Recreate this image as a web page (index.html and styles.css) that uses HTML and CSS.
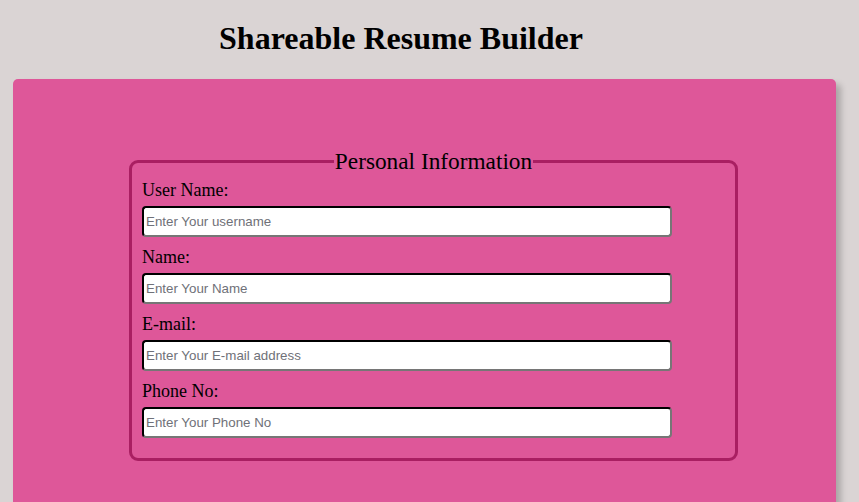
FILE: index.html
```html
<!DOCTYPE html>
<html lang="en">
<head>
<meta charset="utf-8">
<title>Shareable Resume Builder</title>
<link rel="stylesheet" href="styles.css">
</head>
<body>
  <h1 class="title">Shareable Resume Builder</h1>
  <main class="card">
    <form class="form">
      <fieldset class="section">
        <legend class="section-title">Personal Information</legend>
        <label class="field-label" for="username">User Name:</label>
        <input class="field-input" id="username" type="text" placeholder="Enter Your username">
        <label class="field-label" for="name">Name:</label>
        <input class="field-input" id="name" type="text" placeholder="Enter Your Name">
        <label class="field-label" for="email">E-mail:</label>
        <input class="field-input" id="email" type="email" placeholder="Enter Your E-mail address">
        <label class="field-label" for="phone">Phone No:</label>
        <input class="field-input" id="phone" type="tel" placeholder="Enter Your Phone No">
      </fieldset>
    </form>
  </main>
</body>
</html>
```
FILE: styles.css
```css
html, body {
  height: 100%;
}
body {
  margin: 0;
  background: #dad4d4;
  font-family: "Liberation Serif", "Times New Roman", serif;
  color: #000;
  overflow: hidden;
}
.title {
  margin: 0;
  padding: 20px 0 0;
  width: 802px;
  text-align: center;
  font-size: 32px;
  font-weight: bold;
  line-height: 37px;
}
.card {
  margin: 22px 23px 0 13px;
  height: 600px;
  background: #de5799;
  border-radius: 5px;
  box-shadow: 5px 5px 6px rgba(0, 0, 0, 0.22);
  padding-top: 69px;
  box-sizing: border-box;
}
.form {
  margin: 0 98px 0 116px;
}
.section {
  margin: 0;
  border: 3px solid #a91f62;
  border-radius: 9px;
  padding: 5px 10px 11px;
  display: flex;
  flex-direction: column;
  align-items: flex-start;
}
.section-title {
  margin: 0 auto;
  padding: 0 1px;
  font-size: 23.3px;
  line-height: 26px;
}
.field-label {
  font-size: 18px;
  line-height: 23px;
  margin-bottom: 4px;
}
.field-input {
  box-sizing: border-box;
  width: 530px;
  height: 31px;
  margin: 0 0 9px;
  padding: 1px 2px;
  border: 2px inset #767676;
  border-top-color: #1a1a1a;
  border-left-color: #1a1a1a;
  border-radius: 4px;
  background: #fff;
  font-family: "Liberation Sans", Arial, sans-serif;
  font-size: 13.33px;
}
.field-input::placeholder {
  color: #6f7178;
}
```
